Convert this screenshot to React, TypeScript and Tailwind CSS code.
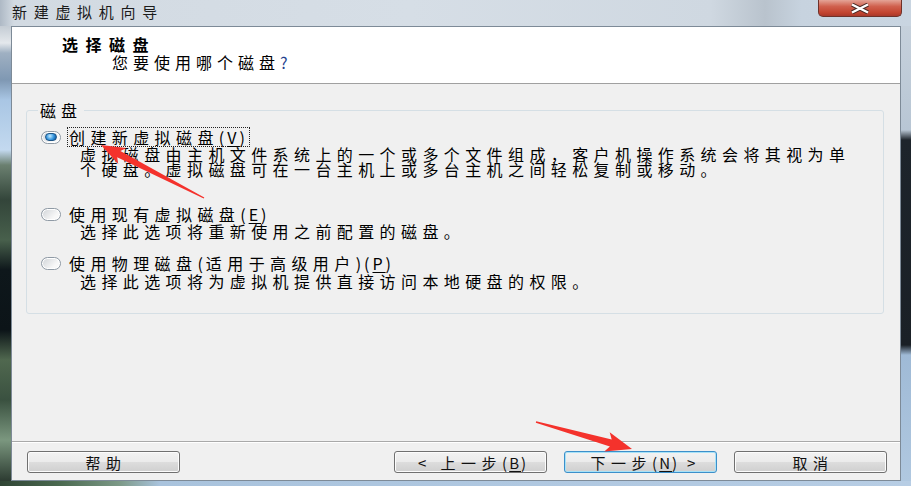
function Radio({ checked }: { checked?: boolean }) {
  return (
    <span className="flex h-[13px] w-[20px] shrink-0 items-center justify-center rounded-full border border-[#8f9aa5] bg-[linear-gradient(135deg,#cfd3d7,#f8f8f8_70%)] shadow-[inset_0_0_0_1px_#ffffff]">
      {checked && (
        <span className="h-[8px] w-[12px] rounded-full border border-[#1d5587] bg-[radial-gradient(circle_at_40%_35%,#c4ebff,#2f91dc_55%,#0d4b8a)]" />
      )}
    </span>
  )
}

function Btn({ children, primary }: { children: React.ReactNode; primary?: boolean }) {
  return (
    <button
      type="button"
      className={
        primary
          ? 'flex h-[22px] w-[153px] items-center justify-center rounded-[3px] border border-[#3b8fca] bg-[linear-gradient(#f2f2f2_0%,#ebebeb_50%,#dddddd_51%,#cfcfcf_100%)] pl-[5px] text-[15px] leading-none tracking-[5.5px] text-[#111] shadow-[inset_0_0_0_1px_#a8e2f7]'
          : 'flex h-[22px] w-[153px] items-center justify-center rounded-[3px] border border-[#707070] bg-[linear-gradient(#f2f2f2_0%,#ebebeb_50%,#dddddd_51%,#cfcfcf_100%)] pl-[5px] text-[15px] leading-none tracking-[5.5px] text-[#111] shadow-[inset_0_0_0_1px_#fcfcfc]'
      }
    >
      {children}
    </button>
  )
}

export default function App() {
  return (
    <div className="relative flex h-[486px] w-[911px] flex-col overflow-hidden bg-[#c9d5e1] font-['Noto_Sans_CJK_SC','Noto_Sans',sans-serif] text-black">
      {/* title bar */}
      <div className="flex h-[26px] shrink-0 items-start bg-[linear-gradient(90deg,#aeb9c5_0px,#d2dae2_14px,#d6dee6_45%,#cfd8e1_78%,#b9c3cd_84%,#c7d3df_88%,#c9d5e1_100%)]">
        <div className="pl-[12px] pt-[2px] text-[15px] leading-[20px] tracking-[6.7px] text-[#1b1b1b]">
          新建虚拟机向导
        </div>
        <button
          type="button"
          className="ml-auto mr-[9px] flex h-[17px] w-[84px] items-center justify-center rounded-b-[5px] border border-t-0 border-[#6e3129] bg-[linear-gradient(#e4a497,#d0604e_40%,#c2432f_80%,#a8392b)]"
        >
          <svg width="22" height="11" viewBox="0 0 22 11">
            <path d="M3 1.5 L19 9.5 M19 1.5 L3 9.5" stroke="#4a2a26" strokeWidth="4.2" />
            <path d="M3 1.5 L19 9.5 M19 1.5 L3 9.5" stroke="#ffffff" strokeWidth="2.3" />
          </svg>
        </button>
      </div>

      <div className="flex min-h-0 flex-1">
        <div className="w-[11px] shrink-0 bg-[linear-gradient(#c4ccd4_0px,#e4e8ec_17px,#9fb0c2_27px,#7f98b3_54px,#a9c6e4_74px,#c3d9ef_124px,#6b8070_139px,#33453a_174px,#48604c_214px,#0e171b_244px,#0c1418_304px,#50684f_334px,#3a5140_374px,#7b977f_414px,#2c3b31_455px)]" />

        <div className="flex min-w-0 flex-1 flex-col border border-[#7d8a97] bg-[#f0f0f0]">
          {/* header */}
          <div className="h-[57px] shrink-0 border-b border-[#a0a0a0] bg-white pt-[8px]">
            <div className="pl-[50px] text-[16px] font-bold leading-[18px] tracking-[7.5px]">选择磁盘</div>
            <div className="pl-[100px] text-[16px] leading-[18px] tracking-[5px]">
              您要使用哪个磁盘<span className="tracking-normal text-[#1f3f8f]">?</span>
            </div>
          </div>

          {/* body */}
          <div className="flex min-h-0 flex-1 flex-col">
            <fieldset className="ml-[14px] mr-[16px] mt-[16px] h-[214px] rounded-[3px] border border-[#d5dfe5] p-0">
              <legend className="ml-[11px] px-[2px] text-[16px] leading-[20px] tracking-[5px]">磁盘</legend>
              <div className="flex flex-col pt-[7px] text-[16px]">
                <div className="flex h-[20px] items-center pl-[14px]">
                  <Radio checked />
                  <span className="ml-[6px] border border-dotted border-[#222] px-[1px] leading-[18px] tracking-[5.4px]">
                    创建新虚拟磁盘<span className="tracking-[3px]">(<u className="underline-offset-2">V</u>)</span>
                  </span>
                </div>
                <div className="ml-[53px] leading-[15px] tracking-[5.4px]">
                  <div>虚拟磁盘由主机文件系统上的一个或多个文件组成，客户机操作系统会将其视为单</div>
                  <div>个硬盘。虚拟磁盘可在一台主机上或多台主机之间轻松复制或移动。</div>
                </div>

                <div className="mt-[27px] flex h-[20px] items-center pl-[14px]">
                  <Radio />
                  <span className="ml-[6px] border border-transparent px-[1px] leading-[18px] tracking-[5.4px]">
                    使用现有虚拟磁盘<span className="tracking-[3px]">(<u className="underline-offset-2">E</u>)</span>
                  </span>
                </div>
                <div className="ml-[53px] leading-[15px] tracking-[5.4px]">选择此选项将重新使用之前配置的磁盘。</div>

                <div className="mt-[14px] flex h-[20px] items-center pl-[14px]">
                  <Radio />
                  <span className="ml-[6px] border border-transparent px-[1px] leading-[18px] tracking-[5.4px]">
                    使用物理磁盘<span className="tracking-[3px]">(</span>适用于高级用户
                    <span className="tracking-[3px]">)(<u className="underline-offset-2">P</u>)</span>
                  </span>
                </div>
                <div className="ml-[53px] mt-[1px] leading-[15px] tracking-[5.4px]">
                  选择此选项将为虚拟机提供直接访问本地硬盘的权限。
                </div>
              </div>
            </fieldset>

            <div className="flex-1" />

            <div className="border-t border-b border-t-[#a9a9a9] border-b-white" />
            <div className="flex items-center pb-[7px] pl-[15px] pr-[13px] pt-[8px]">
              <Btn>帮助</Btn>
              <div className="flex-1" />
              <div className="flex gap-[17px]">
                <Btn>
                  &lt; 上一步<span className="tracking-[2px]">(<u className="underline-offset-2">B</u>)</span>
                </Btn>
                <Btn primary>
                  下一步<span className="tracking-[2px]">(<u className="underline-offset-2">N</u>)</span>
                  <span className="pl-[8px] tracking-normal">&gt;</span>
                </Btn>
                <Btn>取消</Btn>
              </div>
            </div>
          </div>
        </div>

        <div className="w-[10px] shrink-0 bg-[linear-gradient(#c6d1dc_0px,#b8c6d4_104px,#1d242b_114px,#1a2026_319px,#9fbad6_329px,#b0c8e0_455px)]" />
      </div>

      <div className="h-[5px] shrink-0 bg-[linear-gradient(90deg,#2f4434_0px,#4b6a50_60px,#7d9a88_120px,#a9c3dd_160px,#b7cde4_100%)]" />

      {/* annotation arrows */}
      <svg className="pointer-events-none absolute left-0 top-0" width="911" height="486" viewBox="0 0 911 486">
        <polygon
          fill="#f4322c"
          points="101,145 126.4,148 120.4,151.1 204.3,197.4 203.7,198.6 117.2,157.3 118.2,164"
        />
        <polygon
          fill="#f4322c"
          points="632,449 609.7,432.3 611.7,439.6 536.2,421.2 535.8,422.8 609.9,446.4 604.3,451.6"
        />
      </svg>
    </div>
  )
}
